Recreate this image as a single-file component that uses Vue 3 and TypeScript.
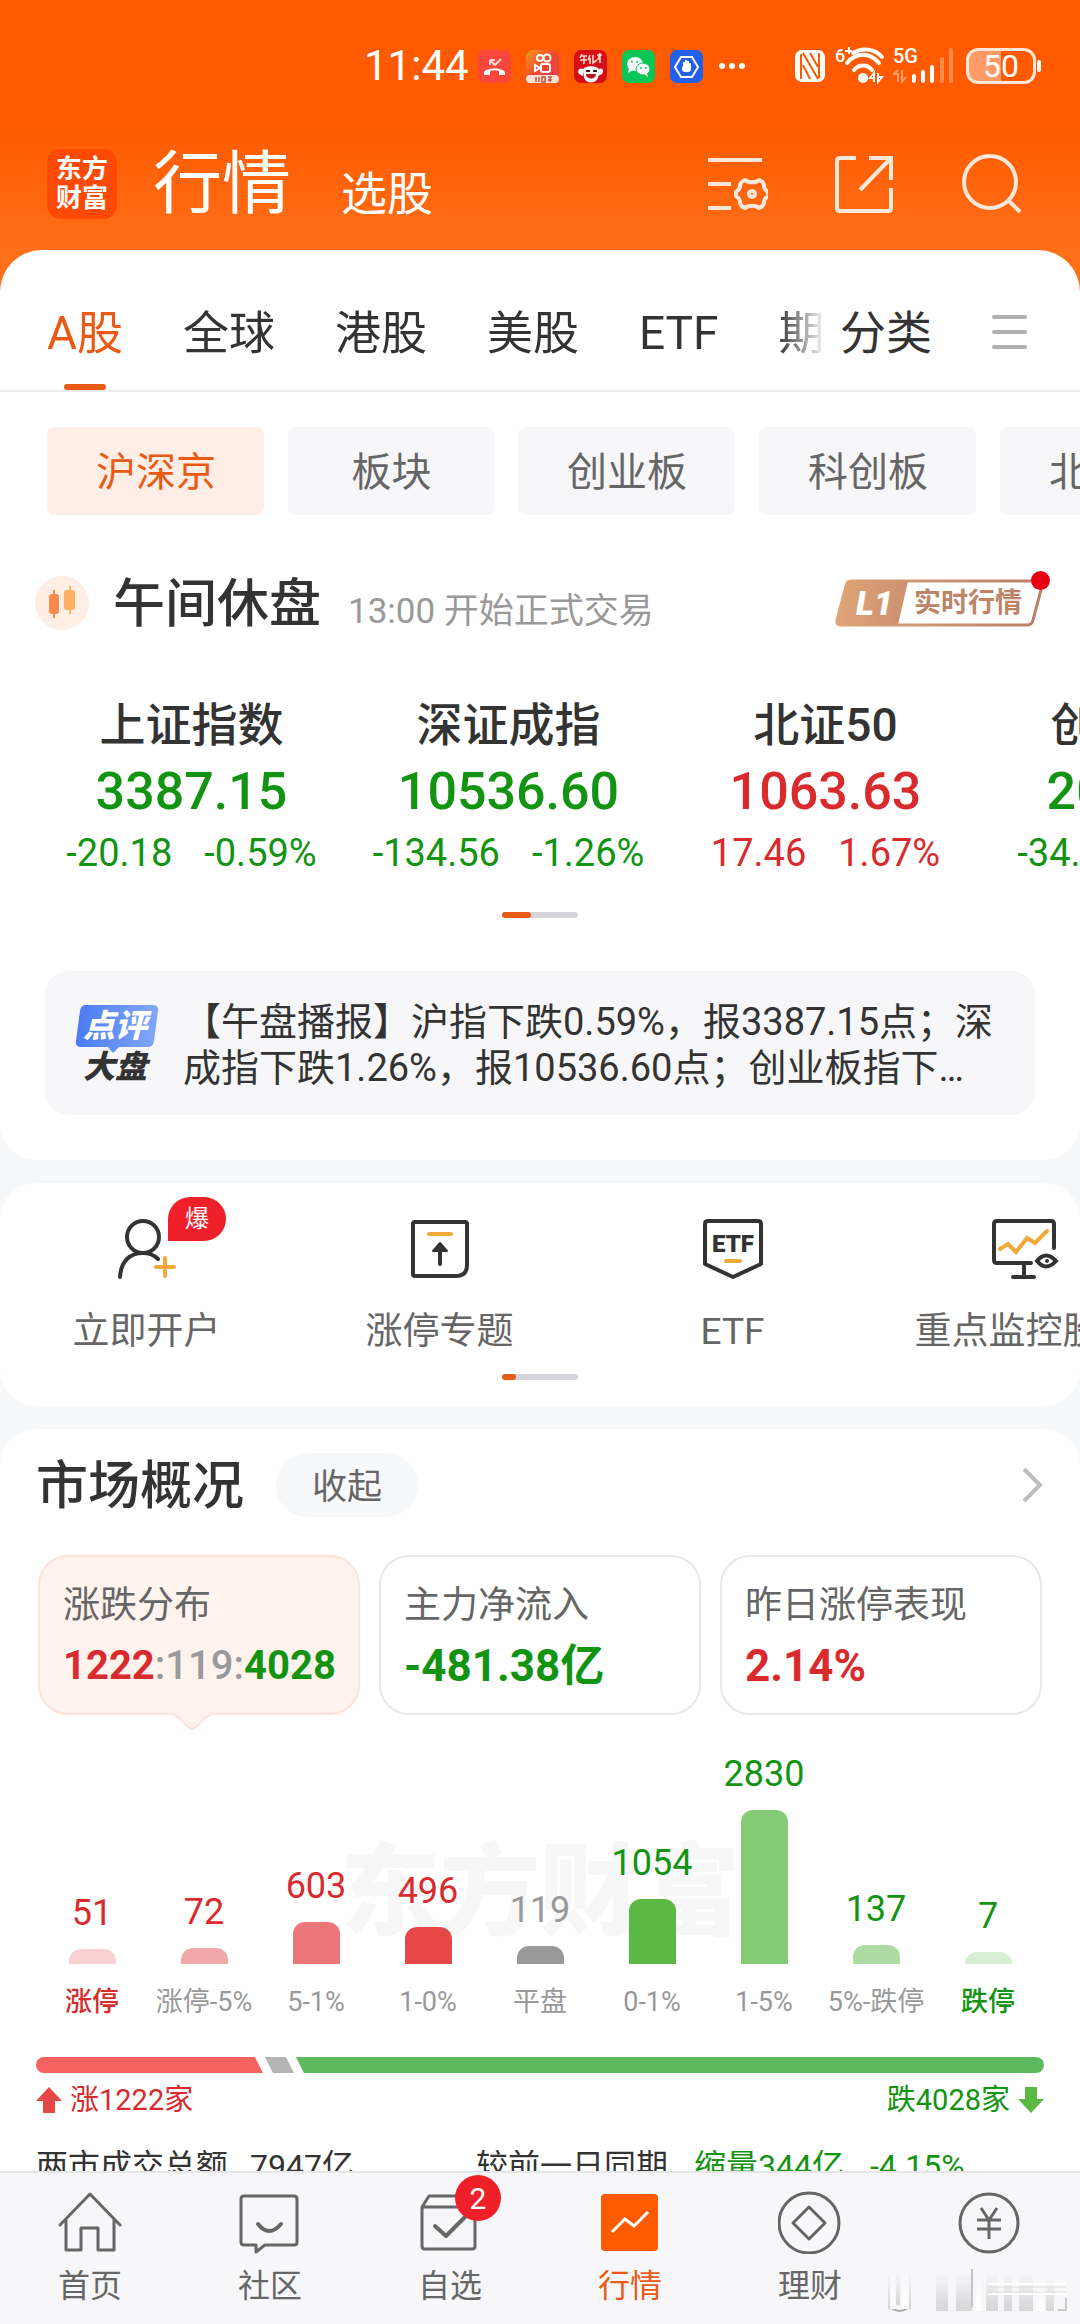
<script setup lang="ts">
type Trend = 'up' | 'down' | 'flat'

interface IndexQuote {
  name: string
  value: string
  change: string
  percent: string
  trend: Trend
}

interface Bucket {
  label: string
  count: number
  trend: Trend
  color: string
  strong?: boolean
}

const tabs = ['A股', '全球', '港股', '美股', 'ETF', '期货']
const chips = ['沪深京', '板块', '创业板', '科创板', '北交所']

const quotes: IndexQuote[] = [
  { name: '上证指数', value: '3387.15', change: '-20.18', percent: '-0.59%', trend: 'down' },
  { name: '深证成指', value: '10536.60', change: '-134.56', percent: '-1.26%', trend: 'down' },
  { name: '北证50', value: '1063.63', change: '17.46', percent: '1.67%', trend: 'up' },
  { name: '创业板指', value: '2034.24', change: '-34.02', percent: '-1.65%', trend: 'down' },
]

const buckets: Bucket[] = [
  { label: '涨停', count: 51, trend: 'up', color: '#f8d2d3', strong: true },
  { label: '涨停-5%', count: 72, trend: 'up', color: '#f2a7a8' },
  { label: '5-1%', count: 603, trend: 'up', color: '#ed7678' },
  { label: '1-0%', count: 496, trend: 'up', color: '#e64848' },
  { label: '平盘', count: 119, trend: 'flat', color: '#999999' },
  { label: '0-1%', count: 1054, trend: 'down', color: '#5bb943' },
  { label: '1-5%', count: 2830, trend: 'down', color: '#84cb75' },
  { label: '5%-跌停', count: 137, trend: 'down', color: '#addca2' },
  { label: '跌停', count: 7, trend: 'down', color: '#d6eed1', strong: true },
]

const barHeight = (count: number): string => `${Math.round(12 + count * 0.05)}px`

const advancing = 1222
const unchanged = 119
const declining = 4028
</script>

<template>
  <div class="app">
    <div class="screen">
      <header class="hero">
        <div class="status">
          <span class="clock">11:44</span>
          <svg class="mini" viewBox="0 0 33 33">
            <rect width="33" height="33" rx="7" fill="#fb463c" />
            <path d="M6 23c0-6 21-6 21 0v2h-6v-4c-3-1-6-1-9 0v4H6z" fill="#fff" />
            <path d="M12 10v5m0-5h5m-5 0 5 5 6-6" fill="none" stroke="#ffd9d3" stroke-width="2" />
          </svg>
          <svg class="mini" viewBox="0 0 33 33">
            <defs>
              <linearGradient id="ks" x1="0" y1="0" x2="1" y2="1">
                <stop offset="0" stop-color="#f79b1d" />
                <stop offset=".5" stop-color="#f0482f" />
                <stop offset="1" stop-color="#f23c5a" />
              </linearGradient>
            </defs>
            <rect width="33" height="33" rx="7" fill="url(#ks)" />
            <g fill="none" stroke="#fff" stroke-width="2">
              <circle cx="14" cy="8" r="3" />
              <circle cx="21" cy="8" r="3.500" />
              <rect x="15" y="14" width="9" height="8" rx="2" />
              <path d="m14 18-5-3v6z" />
            </g>
            <rect y="25" width="33" height="8" rx="4" fill="#fde3d4" />
            <path d="M10 27v5m3-5v5m3-5h3v5h-3zm6 0h4m-4 3h4m-2-3v5" stroke="#c8523a" stroke-width="1.500" fill="none" />
          </svg>
          <svg class="mini" viewBox="0 0 33 33">
            <rect width="33" height="33" rx="7" fill="#d40f17" />
            <path d="m8 4-2 4m1-2h6M6 10h7M10 6v8m6-9-2 5m2-2v6m3-9v8l4-3m3-7-2 7m4-5h-5m3-1v9" stroke="#ffd8c8" stroke-width="1.600" fill="none" />
            <path d="M9 20c1-5 15-5 16 0l-1 8c-3 6-11 6-14 0z" fill="#fff" />
            <path d="M9 19c-4-2-6 2-4 5l4 2zm16 0c4-2 5 2 3 5l-4 2z" fill="#fff" />
            <path d="M12 21h4m3 0h4" stroke="#31201c" stroke-width="2" />
            <path d="M12 24h10c0 6-10 6-10 0z" fill="#b8121a" />
          </svg>
          <svg class="mini" viewBox="0 0 33 33">
            <rect width="33" height="33" rx="7" fill="#06c755" />
            <ellipse cx="13" cy="14" rx="8" ry="7" fill="#fff" />
            <path d="m7 18-1 5 5-3z" fill="#fff" />
            <ellipse cx="21" cy="19" rx="7" ry="6" fill="#fff" stroke="#06c755" />
            <path d="m25 23 1 4-4-3z" fill="#fff" />
            <g fill="#06c755">
              <circle cx="10" cy="12" r="1" />
              <circle cx="15" cy="12" r="1" />
              <circle cx="19" cy="18" r="1" />
              <circle cx="24" cy="18" r="1" />
            </g>
          </svg>
          <svg class="mini" viewBox="0 0 33 33">
            <rect width="33" height="33" rx="7" fill="#2160ec" />
            <path d="M11 7h11l6 10-6 10H11L5 17z" fill="none" stroke="#fff" stroke-width="2" />
            <path d="M12 16v4c1 3 8 3 9 0v-7h-2v-2h-2v-1h-2v2h-2v6z" fill="#fff" />
          </svg>
          <svg class="dots" viewBox="0 0 28 8" fill="#fff">
            <circle cx="4" cy="4" r="3" />
            <circle cx="14" cy="4" r="3" />
            <circle cx="24" cy="4" r="3" />
          </svg>
          <svg class="nfc" viewBox="0 0 30 32">
            <rect width="30" height="32" rx="7" fill="#fff" />
            <path d="M6 4v25M24 3v25" stroke="#ff5a00" stroke-width="2" />
            <path d="M8 3 23 29M15 3l8 14M8 15l7 14" stroke="#ff5a00" stroke-width="2" />
          </svg>
          <svg class="wifi" viewBox="0 0 50 40">
            <g fill="none" stroke="#fff" stroke-width="4" stroke-linecap="round">
              <path d="M18 7c10-6 22-4 29 4" />
              <path d="M12 17c9-11 23-11 32 0" />
              <path d="M19 24c5-6 13-6 18 0" />
            </g>
            <circle cx="28" cy="32" r="5" fill="#fff" />
            <path d="m39 27-4 5h4zm0 0v9m4 0 4-5h-4zm0 0v-9" stroke="#fff" stroke-width="2" />
            <text x="0" y="16" class="tiny">6</text>
            <path d="M10 5h7m-3-4v7" stroke="#fff" stroke-width="2" />
          </svg>
          <svg class="cell" viewBox="0 0 62 40">
            <text x="0" y="17" class="tiny g5">5G</text>
            <path d="m5 24-4 4h4v8m4-12v12l4-5" stroke="#ff9c66" stroke-width="2" fill="none" />
            <g stroke="#fff" stroke-width="4" stroke-linecap="round">
              <path d="M21 30v5" />
              <path d="M30 26v9" />
              <path d="M39 21v14" />
            </g>
            <g stroke="#ff8a4c" stroke-width="4" stroke-linecap="round">
              <path d="M49 13v22" />
              <path d="M58 4v31" />
            </g>
          </svg>
          <span class="battery"><span class="level">50</span></span>
        </div>
        <div class="title-row">
          <span class="logo">东方<br />财富</span>
          <h1>行情</h1>
          <a class="sub" href="#pick">选股</a>
          <span class="tools">
            <button type="button" aria-label="设置">
              <svg viewBox="0 0 60 60" fill="none" stroke="#fff" stroke-width="4">
                <path d="M0 6h54M0 30h23M0 54h23" />
                <path d="M37 26c3 3 11 3 14 0q5 2 5 6 0 3 4 6v4q-4 3-4 6 0 4-5 6c-3-3-11-3-14 0q-5-2-5-6 0-3-4-6v-4q4-3 4-6 0-4 5-6z" stroke-linejoin="round" />
                <circle cx="44" cy="40" r="3" />
              </svg>
            </button>
            <button type="button" aria-label="分享">
              <svg viewBox="0 0 60 60" fill="none" stroke="#fff" stroke-width="4">
                <path d="M21 4H5q-3 0-3 3v47q0 3 3 3h48q3 0 3-3V34" />
                <path d="M34 4h22v22M55 5 25 36" />
              </svg>
            </button>
            <button type="button" aria-label="搜索">
              <svg viewBox="0 0 60 60" fill="none" stroke="#fff" stroke-width="4">
                <circle cx="28" cy="28" r="26" />
                <path d="m46 46 12 12" />
              </svg>
            </button>
          </span>
        </div>
      </header>

      <section class="panel market">
        <div class="tabs">
          <nav class="tab-list">
            <a v-for="(tab, i) in tabs" :key="tab" href="#tab" :class="{ active: i === 0 }">{{ tab }}</a>
          </nav>
          <a class="sort" href="#sort">分类</a>
          <button class="menu" type="button" aria-label="菜单"><i></i><i></i><i></i></button>
        </div>

        <div class="chips">
          <button v-for="(chip, i) in chips" :key="chip" type="button" :class="{ active: i === 0 }">{{ chip }}</button>
        </div>

        <div class="session">
          <svg class="candle" viewBox="0 0 54 54">
            <circle cx="27" cy="27" r="27" fill="#feeee4" />
            <rect x="14" y="18" width="10" height="20" rx="3" fill="#f98a4b" />
            <path d="M19 14v28" stroke="#f98a4b" stroke-width="2" />
            <rect x="29" y="14" width="11" height="20" rx="3" fill="#fcae62" />
            <path d="M35 10v28" stroke="#fcae62" stroke-width="2" />
          </svg>
          <strong>午间休盘</strong>
          <span class="note">13:00 开始正式交易</span>
          <a class="level1" href="#l1">
            <svg viewBox="0 0 212 48">
              <defs>
                <linearGradient id="gold" x1="0" y1="0" x2="1" y2="0">
                  <stop offset="0" stop-color="#dfa576" />
                  <stop offset="1" stop-color="#b97f68" />
                </linearGradient>
                <linearGradient id="goldFill" x1="0" y1="0" x2="1" y2="0">
                  <stop offset="0" stop-color="#dfa576" />
                  <stop offset="1" stop-color="#cb9070" />
                </linearGradient>
              </defs>
              <path d="M16 2h187q5 0 4 5l-9 34q-1 5-6 5H6q-5 0-4-5L11 7q1-5 5-5z" fill="#fff" stroke="url(#gold)" stroke-width="3" />
              <path d="M16 2h57L63 46H6q-5 0-4-5L11 7q1-5 5-5z" fill="url(#goldFill)" />
            </svg>
            <b>L1</b><span>实时行情</span>
            <i class="dot"></i>
          </a>
        </div>

        <div class="quotes">
          <a v-for="q in quotes" :key="q.name" class="quote" :class="q.trend" href="#quote">
            <span class="name">{{ q.name }}</span>
            <span class="value">{{ q.value }}</span>
            <span class="delta"><span>{{ q.change }}</span><span>{{ q.percent }}</span></span>
          </a>
        </div>
        <div class="pager"><i class="wide"></i></div>

        <a class="brief" href="#brief">
          <span class="brief-tag">
            <svg viewBox="0 0 84 52">
              <defs>
                <linearGradient id="blue" x1="0" y1="0" x2="1" y2="0">
                  <stop offset="0" stop-color="#4a7af4" />
                  <stop offset="1" stop-color="#83a8f8" />
                </linearGradient>
              </defs>
              <path d="M10 1h68q6 0 5 6l-4 30q-1 6-6 6H44l-6 6-5-6H6q-6 0-5-6L5 7q1-6 5-6z" fill="url(#blue)" />
            </svg>
            <b class="on">点评</b>
            <b>大盘</b>
          </span>
          <p>【午盘播报】沪指下跌0.59%，报3387.15点；深成指下跌1.26%，报10536.60点；创业板指下跌1.65%，报2034.24点。</p>
        </a>
      </section>

      <section class="panel shortcuts">
        <div class="shortcut-row">
          <a href="#open">
            <svg viewBox="0 0 60 60" fill="none" stroke="#333" stroke-width="4" stroke-linecap="round">
              <circle cx="26" cy="18" r="16" />
              <path d="M3 58c1-16 10-24 23-24 6 0 11 2 15 6" />
              <path d="M39 48h18m-9-9v18" stroke="#f2a93b" />
            </svg>
            <span>立即开户</span>
            <em>爆</em>
          </a>
          <a href="#limit">
            <svg viewBox="0 0 60 60" fill="none" stroke="#333" stroke-width="4" stroke-linecap="round">
              <path d="M5 3h50q2 0 2 2v41q0 11-11 11H5q-2 0-2-2V5q0-2 2-2z" />
              <path d="M19 15h22" stroke="#f2a93b" />
              <path d="M30 45V28" />
              <path d="m30 24-7 8h14z" fill="#333" stroke-width="2" stroke-linejoin="round" />
            </svg>
            <span>涨停专题</span>
          </a>
          <a href="#etf">
            <svg viewBox="0 0 60 60" fill="none" stroke="#333" stroke-width="4" stroke-linecap="round">
              <path d="M5 2h50q3 0 3 3v40L30 58 2 45V5q0-3 3-3z" stroke-linejoin="round" />
              <text x="30" y="33" class="etf">ETF</text>
              <path d="M23 42h14" stroke="#f2a93b" />
            </svg>
            <span>ETF</span>
          </a>
          <a href="#watch">
            <svg viewBox="0 0 68 60" fill="none" stroke="#333" stroke-width="4" stroke-linecap="round">
              <path d="M39 44H5q-3 0-3-3V5q0-3 3-3h54q3 0 3 3v24" />
              <path d="m8 30 8-5 8 8 11-14 8 5 12-12" stroke="#f2a93b" />
              <path d="M32 45v12M21 58h21" />
              <path d="M45 42q9-11 19 0-10 11-19 0z" />
              <circle cx="55" cy="42" r="2" fill="#333" stroke="none" />
            </svg>
            <span>重点监控股票</span>
          </a>
        </div>
        <div class="pager"><i></i></div>
      </section>

      <section class="panel overview">
        <div class="heading">
          <h2>市场概况</h2>
          <button type="button">收起</button>
          <svg viewBox="0 0 24 38" fill="none" stroke="#bdbdbd" stroke-width="4">
            <path d="m4 3 16 16L4 35" />
          </svg>
        </div>

        <div class="cards">
          <div class="card selected">
            <span>涨跌分布</span>
            <b class="ratio"><i class="up">{{ advancing }}</i><i class="flat">:{{ unchanged }}:</i><i class="down">{{ declining }}</i></b>
            <svg class="notch" viewBox="0 0 40 17">
              <path d="M0 0h40c-4 1-5 3-16 14q-4 4-8 0C6 3 4 1 0 0z" fill="#fff3ee" />
              <path d="M0 1c4 1 5 2 16 13q4 4 8 0C35 3 36 2 40 1" fill="none" stroke="#fde3d8" stroke-width="2" />
            </svg>
          </div>
          <div class="card">
            <span>主力净流入</span>
            <b class="down">-481.38亿</b>
          </div>
          <div class="card">
            <span>昨日涨停表现</span>
            <b class="up">2.14%</b>
          </div>
        </div>

        <div class="chart">
          <div class="brand">东方财富</div>
          <div v-for="b in buckets" :key="b.label" class="col" :class="b.trend">
            <span class="count">{{ b.count }}</span>
            <span class="bar" :style="{ height: barHeight(b.count), background: b.color }"></span>
            <span class="tick" :class="{ strong: b.strong }">{{ b.label }}</span>
          </div>
        </div>

        <div class="split">
          <i class="s-up" :style="{ flexGrow: advancing }"></i>
          <i class="s-flat"></i>
          <i class="s-down" :style="{ flexGrow: declining }"></i>
        </div>
        <div class="totals">
          <span class="up">
            <svg viewBox="0 0 26 26" fill="#e64848"><path d="M13 0 26 14h-7v12H7V14H0z" /></svg>涨{{ advancing }}家
          </span>
          <span class="down">
            跌{{ declining }}家<svg viewBox="0 0 26 26" fill="#5bb943"><path d="M13 26 0 12h7V0h12v12h7z" /></svg>
          </span>
        </div>

        <div class="turnover">
          <div><span>两市成交总额</span><span>7947亿</span></div>
          <div><span>较前一日同期</span><span class="down">缩量344亿</span><span class="down">-4.15%</span></div>
        </div>
      </section>
    </div>

    <nav class="dock">
      <a href="#home">
        <svg viewBox="0 0 64 64" fill="none" stroke="#666" stroke-width="3" stroke-linejoin="round" stroke-linecap="round">
          <path d="M2 35 32 4l30 31M8 30v30h15V38h17v22h16V30" />
        </svg>
        <span>首页</span>
      </a>
      <a href="#community">
        <svg viewBox="0 0 64 64" fill="none" stroke="#666" stroke-width="3" stroke-linejoin="round" stroke-linecap="round">
          <path d="M6 6h50q3 0 3 3v43q0 3-3 3H27l-9 7v-7H6q-3 0-3-3V9q0-3 3-3z" />
          <path d="M20 34q11 14 23 0" stroke-width="4" />
        </svg>
        <span>社区</span>
      </a>
      <a href="#watchlist">
        <svg viewBox="0 0 64 64" fill="none" stroke="#666" stroke-width="3" stroke-linejoin="round" stroke-linecap="round">
          <path d="M4 17h53v39q0 3-3 3H7q-3 0-3-3zM4 17l7-11h39l7 11" />
          <path d="m17 36 11 10 20-20" stroke-width="4" />
        </svg>
        <span>自选</span>
        <em>2</em>
      </a>
      <a href="#market" class="active">
        <svg viewBox="0 0 64 64" fill="none">
          <rect x="3" y="4" width="57" height="57" rx="4" fill="#ff5a00" />
          <path d="m14 42 13-13 9 7 14-14" stroke="#fff" stroke-width="3" />
        </svg>
        <span>行情</span>
      </a>
      <a href="#wealth">
        <svg viewBox="0 0 64 64" fill="none" stroke="#666" stroke-width="3" stroke-linejoin="round">
          <circle cx="31" cy="33" r="30" />
          <path d="m31 17 16 16-16 16-16-16z" />
        </svg>
        <span>理财</span>
      </a>
      <a href="#trade">
        <svg viewBox="0 0 64 64" fill="none" stroke="#666" stroke-width="3">
          <circle cx="31" cy="33" r="29" />
          <path d="m23 18 8 12 8-12M19 30h24M19 39h24M31 30v19" />
        </svg>
      </a>
      <svg class="smudge" viewBox="0 0 184 44">
        <defs>
          <linearGradient id="fade" x1="0" y1="0" x2="0" y2="1">
            <stop offset="0" stop-color="#b4b4b4" stop-opacity="0" />
            <stop offset="1" stop-color="#b4b4b4" stop-opacity=".5" />
          </linearGradient>
          <linearGradient id="fadeWhite" x1="0" y1="0" x2="0" y2="1">
            <stop offset="0" stop-color="#fff" stop-opacity="0" />
            <stop offset="1" stop-color="#fff" />
          </linearGradient>
        </defs>
        <g fill="url(#fade)">
          <rect x="0" y="4" width="2" height="36" />
          <rect x="8" y="4" width="4" height="32" />
          <rect x="21" y="4" width="2" height="36" />
          <rect x="48" y="4" width="12" height="38" />
          <rect x="68" y="4" width="16" height="38" />
          <rect x="98" y="4" width="12" height="38" />
          <rect x="116" y="4" width="8" height="38" />
          <rect x="131" y="4" width="14" height="38" />
          <rect x="158" y="8" width="8" height="34" />
        </g>
        <path d="M84 0v38" stroke="#c4c4c4" stroke-width="2" />
        <path d="M100 15h78M100 25h78" stroke="#fff" stroke-width="2" />
        <path d="M100 18h78M100 23h78" stroke="#dedede" stroke-width="1" />
        <path d="M178 29v12h-8" stroke="#c9c9c9" stroke-width="2" fill="none" />
        <path d="M3 39q9 6 17 0" stroke="#aaa" stroke-width="2" fill="none" />
        <g fill="url(#fadeWhite)">
          <rect x="3" y="2" width="4" height="38" />
          <rect x="14" y="2" width="6" height="38" />
          <rect x="88" y="4" width="6" height="38" />
          <rect x="150" y="18" width="6" height="24" />
        </g>
      </svg>
    </nav>
  </div>
</template>

<style>
body {
  margin: 0;
  background: #f7f8fa;
}
</style>

<style scoped>
* {
  box-sizing: border-box;
}

.app {
  display: flex;
  flex-direction: column;
  height: 100vh;
  font-family: Roboto, "Noto Sans CJK SC", sans-serif;
  color: #333;
  background: #f7f8fa;
}

a {
  color: inherit;
  text-decoration: none;
}

button {
  padding: 0;
  border: 0;
  background: none;
  font: inherit;
  color: inherit;
}

i {
  font-style: normal;
}

svg {
  display: block;
  flex: none;
}

.up {
  color: #d92b2e;
}

.down {
  color: #129412;
}

.flat {
  color: #999;
}

.screen {
  flex: 1;
  min-height: 0;
  overflow: hidden;
}

/* header */
.hero {
  padding-bottom: 42px;
  background: linear-gradient(#ff5a00 0, #ff5a00 120px, #ff6f18 250px);
  color: #fff;
}

.status {
  display: flex;
  align-items: center;
  height: 118px;
  padding: 14px 44px 0 364px;
}

.clock {
  margin-right: 9px;
  font-size: 42px;
  line-height: 44px;
}

.mini {
  width: 33px;
  height: 33px;
  margin-right: 15px;
}

.dots {
  width: 28px;
  height: 8px;
}

.nfc {
  width: 30px;
  height: 32px;
  margin-left: auto;
  margin-right: 10px;
}

.wifi {
  width: 50px;
  height: 40px;
  margin-right: 8px;
}

.cell {
  width: 62px;
  height: 40px;
  margin-right: 11px;
}

.tiny {
  font: 500 18px Roboto, sans-serif;
  fill: #fff;
}

.g5 {
  font-size: 20px;
}

.battery {
  position: relative;
  width: 70px;
  height: 36px;
  border: 3px solid #ffe6d6;
  border-radius: 12px;
  background: linear-gradient(90deg, #ff9c66 50%, transparent 50%);
}

.battery::after {
  content: "";
  position: absolute;
  top: 9px;
  right: -8px;
  width: 4px;
  height: 12px;
  border-radius: 2px;
  background: #fff;
}

.level {
  display: block;
  font-size: 32px;
  line-height: 31px;
  text-align: center;
}

.title-row {
  display: flex;
  align-items: center;
  height: 132px;
  padding: 0 58px 0 47px;
}

.logo {
  width: 70px;
  height: 70px;
  padding-top: 6px;
  border-radius: 14px;
  background: #ff4a06;
  font-size: 26px;
  font-weight: 700;
  line-height: 29px;
  text-align: center;
}

h1 {
  margin: 2px 50px 0 36px;
  font-size: 69px;
  font-weight: 400;
  line-height: 80px;
}

.sub {
  margin-top: 20px;
  font-size: 46px;
  line-height: 60px;
}

.tools {
  display: flex;
  gap: 67px;
  margin-left: auto;
  opacity: .85;
}

.tools svg {
  width: 60px;
  height: 60px;
}

/* panels */
.panel {
  margin-top: 23px;
  border-radius: 36px;
  background: #fff;
}

.market {
  margin-top: -42px;
  padding-bottom: 45px;
  border-radius: 42px 42px 36px 36px;
}

.tabs {
  display: flex;
  height: 142px;
  padding: 24px 53px 0 47px;
  border-bottom: 2px solid #ebebeb;
  font-size: 46px;
  line-height: 118px;
}

.tab-list {
  display: flex;
  flex: 1;
  gap: 60px;
  min-width: 0;
  overflow: hidden;
  white-space: nowrap;
  mask-image: linear-gradient(90deg, #000 calc(100% - 48px), transparent);
}

.tab-list a {
  position: relative;
  flex: none;
}

.tab-list .active {
  color: #ea5a14;
}

.tab-list .active::after {
  content: "";
  position: absolute;
  bottom: 0;
  left: 50%;
  width: 42px;
  height: 6px;
  margin-left: -21px;
  border-radius: 3px;
  background: #ea5a14;
}

.sort {
  margin: 0 60px 0 14px;
}

.menu {
  display: flex;
  flex-direction: column;
  justify-content: center;
  gap: 11px;
  width: 35px;
}

.menu i {
  height: 4px;
  border-radius: 2px;
  background: #b0b0b0;
}

.chips {
  display: flex;
  gap: 24px;
  margin-top: 35px;
  padding-left: 47px;
  overflow: hidden;
}

.chips button {
  flex: none;
  min-width: 206px;
  height: 88px;
  padding: 0 48px 4px 49px;
  border-radius: 8px;
  background: #f7f7fa;
  color: #666;
  font-size: 40px;
}

.chips .active {
  background: #ffeee5;
  color: #ea5a14;
}

.session {
  display: flex;
  align-items: center;
  height: 60px;
  margin-top: 58px;
  padding: 0 33px 0 35px;
}

.candle {
  width: 54px;
  height: 54px;
}

.session strong {
  margin-top: 4px;
  margin-left: 24px;
  font-size: 52px;
  font-weight: 500;
  line-height: 60px;
}

.note {
  margin-top: 18px;
  margin-left: 27px;
  color: #999;
  font-size: 35px;
  line-height: 48px;
}

.level1 {
  position: relative;
  display: flex;
  align-items: center;
  width: 212px;
  height: 48px;
  margin-left: auto;
  color: #bd8468;
  font-size: 27px;
  font-weight: 700;
  line-height: 48px;
}

.level1 svg {
  position: absolute;
  inset: 0;
}

.level1 b,
.level1 span {
  position: relative;
}

.level1 b {
  width: 79px;
  color: #fff;
  font-size: 34px;
  font-weight: 900;
  font-style: italic;
  text-align: center;
}

.dot {
  position: absolute;
  top: -8px;
  right: -3px;
  width: 19px;
  height: 19px;
  border-radius: 50%;
  background: #e60012;
}

.quotes {
  display: flex;
  margin-top: 62px;
  padding-left: 33px;
  overflow: hidden;
}

.quote {
  display: flex;
  flex: none;
  flex-direction: column;
  align-items: center;
  width: 317px;
}

.name {
  color: #333;
  font-size: 46px;
  font-weight: 500;
  line-height: 60px;
}

.value {
  font-size: 52px;
  font-weight: 500;
  line-height: 74px;
}

.delta {
  display: flex;
  gap: 32px;
  font-size: 38px;
  line-height: 48px;
}

.pager {
  width: 76px;
  height: 6px;
  margin: 35px auto 0;
  border-radius: 3px;
  background: #d5d6dc;
}

.pager i {
  display: block;
  width: 14px;
  height: 6px;
  border-radius: 3px;
  background: #ea5a14;
}

.pager .wide {
  width: 29px;
}

.brief {
  display: flex;
  align-items: center;
  margin: 53px 45px 0;
  padding: 28px 36px 24px 30px;
  border-radius: 24px;
  background: #f7f7fa;
}

.brief-tag {
  position: relative;
  display: flex;
  flex: none;
  flex-direction: column;
  width: 84px;
  margin-right: 24px;
  padding: 0 12px 0 8px;
}

.brief-tag svg {
  position: absolute;
  top: 0;
  left: 0;
  width: 84px;
  height: 52px;
}

.brief-tag b {
  position: relative;
  font-size: 32px;
  font-weight: 900;
  font-style: italic;
  line-height: 38px;
}

.brief-tag .on {
  color: #fff;
  line-height: 44px;
}

.brief p {
  display: -webkit-box;
  flex: 1;
  margin: 0;
  overflow: hidden;
  font-size: 38px;
  line-height: 46px;
  -webkit-box-orient: vertical;
  -webkit-line-clamp: 2;
}

/* shortcuts */
.shortcuts {
  padding-bottom: 26px;
}

.shortcut-row {
  display: flex;
  overflow: hidden;
  padding-top: 36px;
}

.shortcut-row a {
  position: relative;
  display: flex;
  flex: none;
  flex-direction: column;
  align-items: center;
  width: 293px;
  color: #666;
  font-size: 37px;
  line-height: 48px;
  white-space: nowrap;
}

.shortcut-row svg {
  height: 60px;
  margin-bottom: 29px;
}

.shortcut-row em {
  position: absolute;
  top: -22px;
  left: 168px;
  width: 58px;
  height: 44px;
  border-radius: 22px 22px 22px 0;
  background: #f0202a;
  color: #fff;
  font-size: 24px;
  font-style: normal;
  line-height: 44px;
  text-align: center;
}

.etf {
  font: 900 24px Roboto, sans-serif;
  fill: #333;
  stroke: none;
  text-anchor: middle;
}

.shortcuts .pager {
  margin-top: 18px;
}

/* overview */
.overview {
  padding: 24px 36px 0;
  border-radius: 36px 36px 0 0;
}

.heading {
  display: flex;
  align-items: center;
  height: 64px;
}

h2 {
  margin: 4px 0 0;
  font-size: 52px;
  font-weight: 500;
  line-height: 64px;
}

.heading button {
  height: 64px;
  margin-left: 32px;
  padding: 0 36px 3px;
  border-radius: 32px;
  background: #f7f8fa;
  color: #666;
  font-size: 35px;
}

.heading svg {
  width: 24px;
  height: 38px;
  margin-left: auto;
}

.cards {
  display: flex;
  gap: 19px;
  margin: 38px 2px 0;
}

.card {
  position: relative;
  display: flex;
  flex: 1;
  flex-direction: column;
  gap: 12px;
  min-width: 0;
  padding: 25px 23px 23px;
  border: 2px solid #e8e8e8;
  border-radius: 30px;
  color: #666;
  font-size: 37px;
  line-height: 48px;
}

.card b {
  font-size: 44px;
}

.card .ratio {
  font-size: 40px;
}

.ratio .flat {
  font-weight: 500;
}

.selected {
  border-color: #fde3d8;
  background: #fff3ee;
}

.notch {
  position: absolute;
  top: 100%;
  left: 50%;
  width: 40px;
  height: 17px;
  margin-left: -27px;
}

.chart {
  position: relative;
  display: flex;
  margin-top: 38px;
}

.brand {
  position: absolute;
  top: 75px;
  left: 0;
  right: 0;
  color: #f7f7f7;
  font-size: 100px;
  font-weight: 900;
  line-height: 130px;
  text-align: center;
}

.col {
  position: relative;
  display: flex;
  flex: 1 0 0;
  flex-direction: column;
  align-items: center;
  justify-content: flex-end;
  min-width: 0;
}

.count {
  margin-bottom: 15px;
  font-size: 36px;
  line-height: 42px;
}

.bar {
  width: 47px;
  border-radius: 12px 12px 0 0;
}

.tick {
  margin-top: 20px;
  color: #999;
  font-size: 27px;
  line-height: 36px;
  white-space: nowrap;
}

.tick.strong {
  color: inherit;
  font-weight: 500;
}

.split {
  display: flex;
  gap: 2px;
  height: 16px;
  margin-top: 37px;
}

.s-up {
  flex-basis: 0;
  border-radius: 8px 0 0 8px;
  background: #f56260;
  clip-path: polygon(0 0, calc(100% - 8px) 0, 100% 100%, 0 100%);
}

.s-flat {
  width: 29px;
  background: #b4b4b4;
  clip-path: polygon(0 0, 21px 0, 100% 100%, 8px 100%);
}

.s-down {
  flex-basis: 0;
  border-radius: 0 8px 8px 0;
  background: #5cb95c;
  clip-path: polygon(0 0, 100% 0, 100% 100%, 8px 100%);
}

.totals {
  display: flex;
  justify-content: space-between;
  margin-top: 7px;
  font-size: 29px;
  line-height: 40px;
}

.totals span {
  display: flex;
  align-items: center;
  gap: 8px;
}

.totals svg {
  width: 26px;
  height: 26px;
}

.turnover {
  display: flex;
  margin-top: 22px;
  font-size: 32px;
  line-height: 48px;
  white-space: nowrap;
}

.turnover div {
  display: flex;
  flex: 0 0 auto;
  gap: 26px;
}

.turnover div:first-child {
  width: 440px;
  gap: 22px;
}

/* bottom navigation */
.dock {
  position: relative;
  display: flex;
  flex: none;
  height: 153px;
  border-top: 2px solid #e6e6e9;
  background: #f7f7fa;
}

.dock a {
  position: relative;
  display: flex;
  flex: 1;
  flex-direction: column;
  align-items: center;
  padding-top: 17px;
  color: #666;
  font-size: 32px;
  line-height: 40px;
}

.dock a svg {
  width: 64px;
  height: 64px;
  margin-bottom: 12px;
}

.dock .active {
  color: #ea5a14;
}

.dock em {
  position: absolute;
  top: 2px;
  left: 50%;
  width: 46px;
  height: 46px;
  margin-left: 5px;
  border-radius: 50%;
  background: #f0202a;
  color: #fff;
  font-size: 30px;
  font-style: normal;
  line-height: 47px;
  text-align: center;
}

.smudge {
  position: absolute;
  right: 8px;
  bottom: 11px;
  width: 184px;
  height: 44px;
}
</style>
